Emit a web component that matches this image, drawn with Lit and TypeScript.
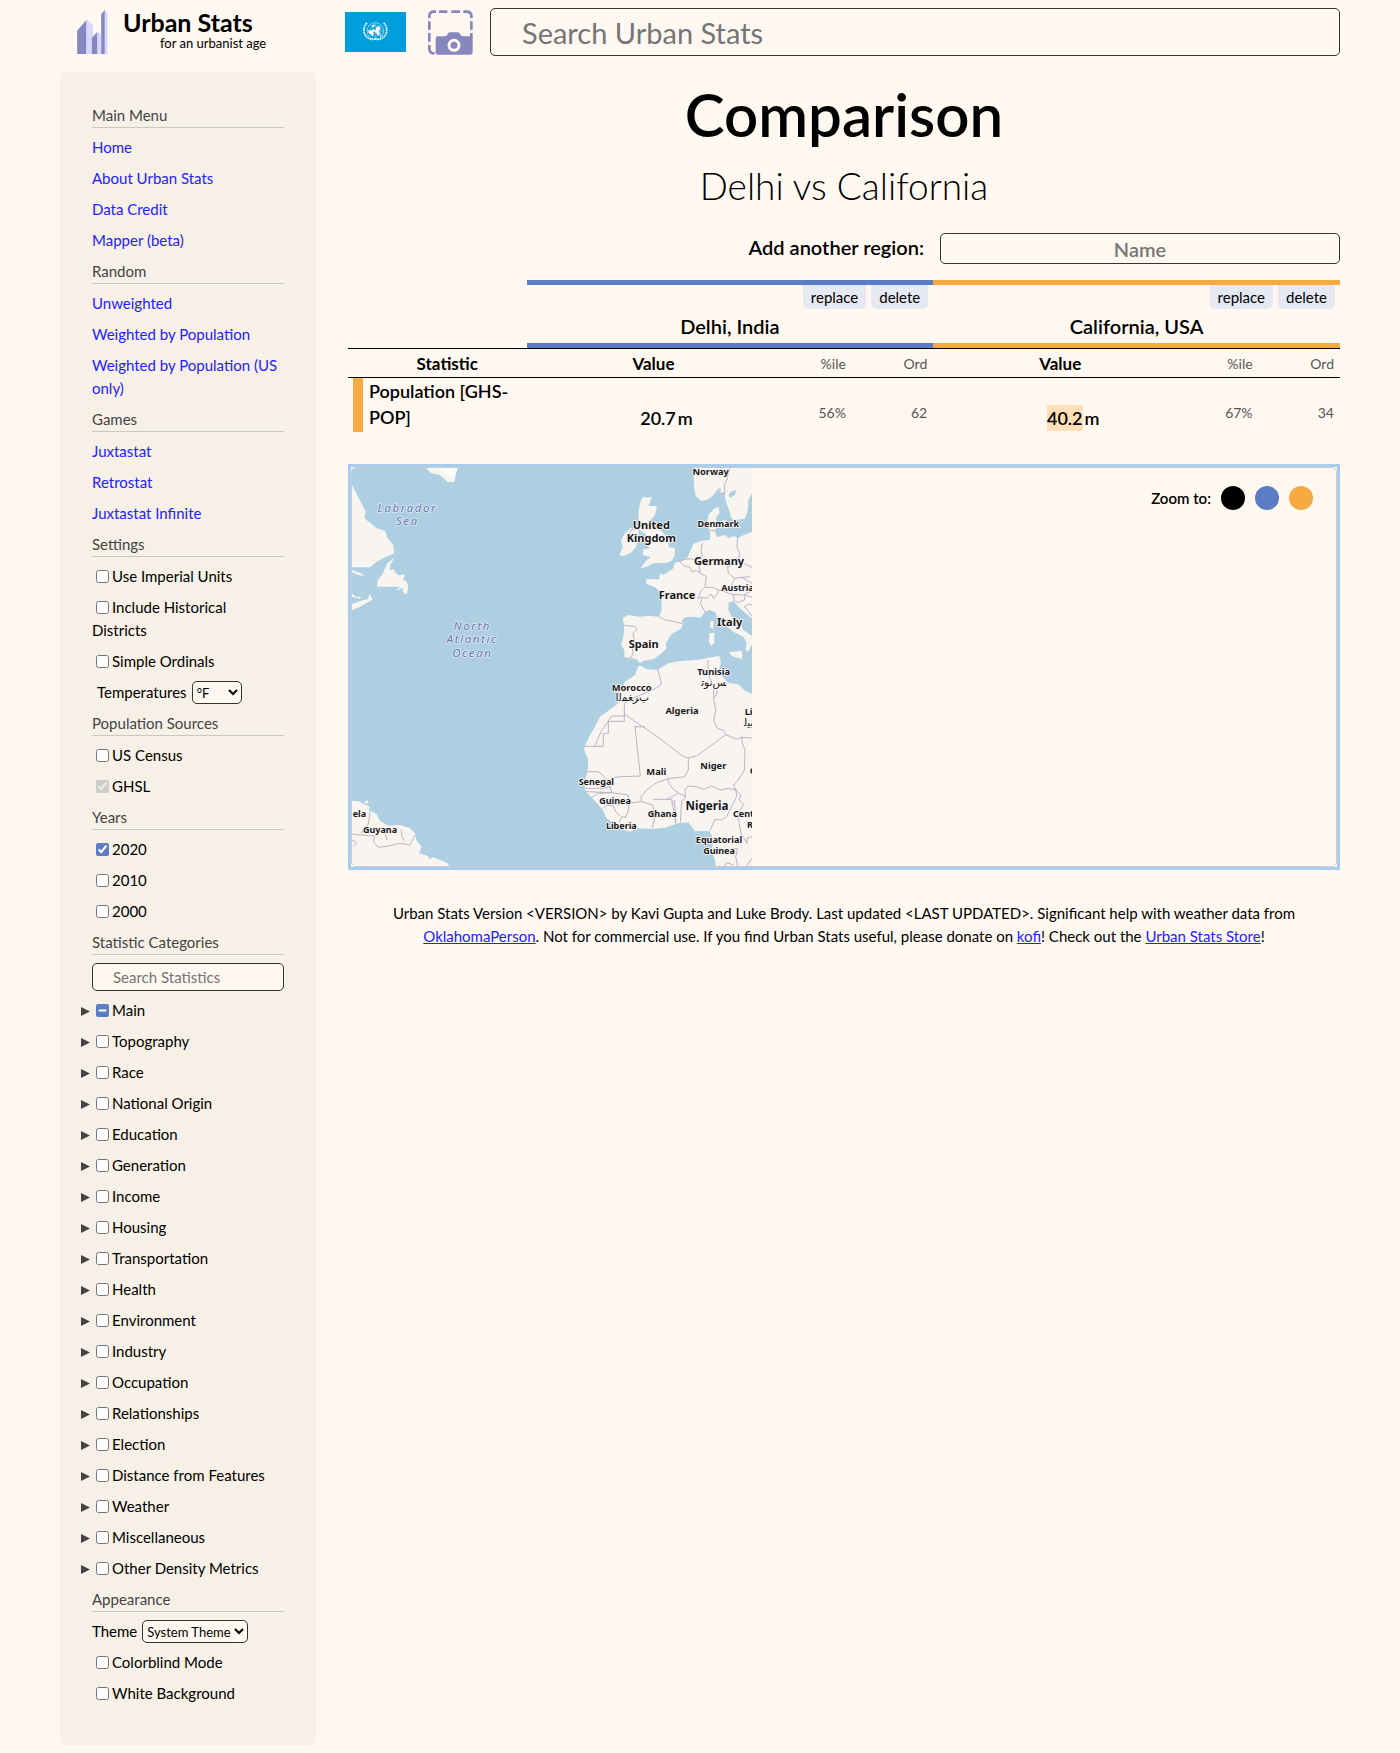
import { LitElement, html, svg, css, nothing } from "lit";
import { customElement } from "lit/decorators.js";

interface CheckItem {
  id: string;
  label: string;
  checked?: boolean;
  disabled?: boolean;
}

interface Region {
  name: string;
  tone: "first" | "second";
  value: string;
  best: boolean;
  percentile: string;
  ordinal: string;
}

const REGIONS: Region[] = [
  { name: "Delhi, India", tone: "first", value: "20.7", best: false, percentile: "56%", ordinal: "62" },
  { name: "California, USA", tone: "second", value: "40.2", best: true, percentile: "67%", ordinal: "34" },
];

const LINK_GROUPS: { title: string; links: string[] }[] = [
  { title: "Main Menu", links: ["Home", "About Urban Stats", "Data Credit", "Mapper (beta)"] },
  { title: "Random", links: ["Unweighted", "Weighted by Population", "Weighted by Population (US only)"] },
  { title: "Games", links: ["Juxtastat", "Retrostat", "Juxtastat Infinite"] },
];

const CATEGORIES = [
  "Main", "Topography", "Race", "National Origin", "Education", "Generation", "Income",
  "Housing", "Transportation", "Health", "Environment", "Industry", "Occupation",
  "Relationships", "Election", "Distance from Features", "Weather", "Miscellaneous",
  "Other Density Metrics",
];

const base = css`
  * {
    box-sizing: border-box;
  }
  :host {
    display: block;
    font-family: Lato, "Open Sans", sans-serif;
    font-size: 15px;
    line-height: 23px;
    color: #000;
  }
  h1, h2, h3, p, ul {
    margin: 0;
    padding: 0;
  }
  input, select, button {
    font-family: inherit;
  }
  .field {
    background: #fff8f0;
    border: 1px solid #333;
    border-radius: 5px;
    min-width: 0;
  }
  .field::placeholder {
    color: #757575;
  }
`;

@customElement("stats-header")
class StatsHeader extends LitElement {
  static styles = [
    base,
    css`
      .bar {
        display: flex;
        align-items: center;
        gap: 29px;
        height: 48px;
      }
      .brand {
        width: 256px;
        display: flex;
        align-items: center;
        gap: 15px;
        padding-left: 17px;
        color: inherit;
        text-decoration: none;
      }
      .words {
        display: flex;
        flex-direction: column;
        padding-bottom: 4px;
      }
      .name {
        font-size: 25px;
        font-weight: 700;
        line-height: 26px;
      }
      .motto {
        font-size: 13px;
        line-height: 16px;
        padding-left: 37px;
      }
      .tools {
        flex: 1;
        display: flex;
        align-items: center;
        align-self: stretch;
      }
      svg {
        display: block;
        flex: none;
      }
      .shot {
        border: 0;
        background: none;
        padding: 0;
        margin: 0 17px 0 22px;
      }
      .search {
        flex: 1;
        align-self: stretch;
        font-size: 29px;
        padding: 0 31px;
      }
    `,
  ];

  render() {
    return html`
      <header class="bar">
        <a class="brand" href="#home">
          <svg width="31" height="44" viewBox="80 28 92 132" aria-hidden="true">
            <path fill="#8787bf" d="M80 90L108 57V160H80ZM123 112L141 93V160H123ZM152 40L163 28V160H152Z" />
            <path fill="#d7d7ff" d="M108 57L127 72V108L123 112V160H108ZM141 93L152 99V160H141ZM163 28L171 36V160H163Z" />
          </svg>
          <span class="words">
            <span class="name">Urban Stats</span>
            <span class="motto">for an urbanist age</span>
          </span>
        </a>
        <div class="tools">
          <svg width="61" height="40" viewBox="0 0 183 120" role="img" aria-label="United Nations">
            <path fill="#009edb" d="M0 0H183V120H0Z" />
            <g fill="none" stroke="#fff">
              <circle cx="91" cy="57" r="25" stroke-width="1.5" />
              <circle cx="91" cy="57" r="17" stroke-width="1" opacity="0.8" />
              <path stroke-width="1" opacity="0.8" d="M91 32V82M66 57H116M74 40L108 74M108 40L74 74" />
              <path stroke-width="5" stroke-dasharray="5 2" d="M66 33C53 44 54 68 68 77C76 83 84 84 91 80" />
              <path stroke-width="5" stroke-dasharray="5 2" d="M116 33C129 44 128 68 114 77C106 83 98 84 91 80" />
            </g>
            <path fill="#fff" d="M71 53L78 56L86 50L90 55L84 62L88 67L82 73L76 66L70 62ZM94 44L104 43L107 51L102 55L105 66L98 72L93 62L88 60L93 52ZM80 40L88 37L88 45L82 46ZM104 70L110 66L107 74Z" />
          </svg>
          <button class="shot" aria-label="Take a screenshot">
            <svg width="45" height="45" viewBox="0 0 135 135" aria-hidden="true">
              <path
                fill="none"
                stroke="#8787bf"
                stroke-width="8"
                d="M4 24V18Q4 5 18 5H24M33 5H58M70 5H96M106 5H115Q130 5 130 18V24M130 34V59M130 69V84M4 34V59M4 69V95M4 105V116Q4 130 20 130"
              />
              <path fill="#8787bf" d="M23 86Q23 79 30 79H50Q56 79 59 72Q61 67 66 67H89Q94 67 96 72Q99 79 106 79H134V127Q134 134 127 134H30Q23 134 23 127Z" />
              <circle cx="78" cy="106" r="15" fill="none" stroke="#fff8f0" stroke-width="9" />
            </svg>
          </button>
          <input class="search field" type="text" placeholder="Search Urban Stats" aria-label="Search Urban Stats" />
        </div>
      </header>
    `;
  }
}

@customElement("stats-sidebar")
class StatsSidebar extends LitElement {
  static styles = [
    base,
    css`
      .panel {
        display: flex;
        flex-direction: column;
        gap: 8px;
        padding: 32px 32px 40px;
        background: #f7f0e6;
        border-radius: 5px;
      }
      .group {
        display: flex;
        flex-direction: column;
        gap: 8px;
      }
      .title {
        font-size: 15px;
        font-weight: 400;
        line-height: 23px;
        color: #444;
        border-bottom: 1px solid #c8c8c8;
      }
      .list {
        list-style: none;
        display: flex;
        flex-direction: column;
        gap: 8px;
      }
      a {
        color: #2222ff;
        text-decoration: none;
      }
      input[type="checkbox"] {
        width: 13px;
        height: 13px;
        margin: 0 3px 0 4px;
        vertical-align: -1px;
        accent-color: #5a7dc3;
      }
      .choice {
        display: flex;
        align-items: center;
        gap: 5px;
        height: 23px;
      }
      .inset {
        padding-left: 5px;
      }
      .choice select {
        font-size: 13px;
        height: 23px;
        padding: 0;
      }
      .degrees {
        width: 50px;
      }
      .filter {
        height: 28px;
        font-size: 15px;
        padding: 0 20px;
        width: 100%;
      }
      .category {
        display: flex;
        margin-left: -11px;
      }
      .expand {
        width: 11px;
        flex: none;
        border: 0;
        padding: 2px 0 0;
        background: none;
        display: flex;
        align-items: center;
      }
    `,
  ];

  private check(item: CheckItem) {
    return html`<input
        type="checkbox"
        id=${item.id}
        ?checked=${item.checked ?? false}
        ?disabled=${item.disabled ?? false}
      /><label for=${item.id}>${item.label}</label>`;
  }

  private checkList(items: CheckItem[]) {
    return items.map((item) => html`<li>${this.check(item)}</li>`);
  }

  render() {
    return html`
      <nav class="panel">
        ${LINK_GROUPS.map(
          (group) => html`
            <section class="group">
              <h3 class="title">${group.title}</h3>
              <ul class="list">
                ${group.links.map((text) => html`<li><a href="#">${text}</a></li>`)}
              </ul>
            </section>
          `
        )}
        <section class="group">
          <h3 class="title">Settings</h3>
          <ul class="list">
            ${this.checkList([
              { id: "imperial", label: "Use Imperial Units" },
              { id: "historical", label: "Include Historical Districts" },
              { id: "ordinals", label: "Simple Ordinals" },
            ])}
            <li class="choice inset">
              <label for="degrees">Temperatures</label>
              <select id="degrees" class="degrees field"><option>°F</option><option>°C</option></select>
            </li>
          </ul>
        </section>
        <section class="group">
          <h3 class="title">Population Sources</h3>
          <ul class="list">
            ${this.checkList([
              { id: "census", label: "US Census" },
              { id: "ghsl", label: "GHSL", checked: true, disabled: true },
            ])}
          </ul>
        </section>
        <section class="group">
          <h3 class="title">Years</h3>
          <ul class="list">
            ${this.checkList([
              { id: "y2020", label: "2020", checked: true },
              { id: "y2010", label: "2010" },
              { id: "y2000", label: "2000" },
            ])}
          </ul>
        </section>
        <section class="group">
          <h3 class="title">Statistic Categories</h3>
          <input class="filter field" type="text" placeholder="Search Statistics" aria-label="Search Statistics" />
          <ul class="list">
            ${CATEGORIES.map(
              (name, i) => html`
                <li class="category">
                  <button class="expand" aria-label="Expand ${name}">
                    <svg width="9" height="9" viewBox="0 0 9 9"><path fill="#444" d="M0 0L9 4.5L0 9Z" /></svg>
                  </button>
                  <span
                    ><input type="checkbox" id="category-${i}" .indeterminate=${i === 0} /><label for="category-${i}"
                      >${name}</label
                    ></span
                  >
                </li>
              `
            )}
          </ul>
        </section>
        <section class="group">
          <h3 class="title">Appearance</h3>
          <ul class="list">
            <li class="choice">
              <label for="theme">Theme</label>
              <select id="theme" class="field"><option>System Theme</option></select>
            </li>
            ${this.checkList([
              { id: "colorblind", label: "Colorblind Mode" },
              { id: "white", label: "White Background" },
            ])}
          </ul>
        </section>
      </nav>
    `;
  }
}

const LAND = [
  // Labrador and Quebec
  "M21 75L62 155L58 175L95 205L120 212L128 235L145 255L147 280L120 292L95 305L75 322L21 322Z",
  // Newfoundland
  "M149 292L127 310L112 343L98 360L96 380L165 380L149 394L172 384L175 400L186 402L190 378L182 360L174 364L180 342L163 346L150 338L148 328L134 331L136 314Z",
  // Nova Scotia, Anticosti
  "M21 400L32 410H50L44 416L26 412L21 410ZM21 432L55 420L68 418L74 402L83 419L45 440L21 450Z",
  "M21 330L48 340L57 348L40 345L21 337Z",
  // Greenland
  "M243 24L258 40L283 44L308 66H327L338 24Z",
  // Scandinavia
  "M1045 24L1048 85L1052 108L1070 123L1090 118L1108 102L1120 85L1126 98L1138 98L1143 125L1152 150L1158 172L1165 180L1200 176L1208 150L1210 120L1221 100V24Z",
  // Great Britain, Ireland
  "M893 112H921L910 138H936L930 165L912 185L935 192L945 210L958 222L970 245L972 262L990 264L988 290L978 304L965 308L925 310L910 318L885 326L905 300L918 292L893 285L895 268L915 265L905 255L905 235L902 222L885 212L882 190L880 155L885 130Z",
  "M858 203L880 208L882 240L872 262L858 278L835 288L823 285L833 262L828 240L840 220Z",
  // Continental Europe
  "M1221 215L1190 228L1178 236L1168 228L1150 234L1140 224L1116 232L1110 215L1118 190L1112 175L1124 158L1120 140L1105 148L1090 165L1087 195L1095 215V240L1070 242L1045 252L1035 275L1028 292L1005 305L990 308L985 325L955 345L945 340L942 358L925 358L903 358L905 372L930 382L945 395L950 415V450L942 470L915 468L880 470L850 465L833 475L838 500L835 530L828 555L838 570V592L857 594L875 598L885 610L895 602L925 598L950 580L965 565L962 550L980 522L1010 505L1013 490L1010 482L1020 472L1050 470L1065 474L1080 455L1095 450L1110 457L1118 472L1135 490L1165 515L1195 530L1205 548L1202 570L1210 576L1221 553V528L1195 510L1180 480L1160 470L1150 450V428L1165 422L1180 440L1200 458L1221 475Z",
  // Danish isles
  "M1128 184L1140 180L1150 190L1144 206L1130 200Z",
  // Mediterranean islands
  "M1097 483L1106 483L1104 508L1095 500ZM1093 520L1108 518V550L1098 557L1092 545ZM1152 577L1190 572L1192 598L1160 588Z",
  // Africa
  "M880 618H890L905 628L937 630L970 610L1000 604L1055 600L1100 592L1122 588L1128 605L1122 630L1132 650L1150 668L1180 673L1200 692L1221 702V1218H1112L1110 1200L1098 1170L1105 1150L1100 1125L1092 1113L1050 1114L1030 1087L1000 1090L960 1103L925 1107L880 1105L855 1115L830 1108L810 1095L785 1075L772 1048L755 1028L740 1012L722 995L718 975L725 945L730 920L728 895L717 868L722 852L735 825L750 800L765 770L790 752L820 730L822 700L840 665L870 645Z",
  // South America, Trinidad
  "M21 1023H40L55 1032L75 1040L70 1050L95 1062L105 1082L130 1097L165 1095L195 1105L210 1120L215 1142L230 1160L222 1180L250 1188L252 1198L265 1192L285 1200L308 1210L312 1218H21ZM56 1027L68 1020V1031Z",
];

const BORDERS = [
  "M1155 24L1148 45L1146 60L1138 75L1140 100L1128 100",
  "M1095 211H1113M853 222L862 206L870 212",
  "M1072 250L1068 272L1072 288L1060 300L1062 318L1066 340L1084 350L1080 380L1070 390L1058 415M1003 304L1020 298L1038 296L1052 302M1003 304L1018 318L1035 322L1040 335L1055 332L1066 340",
  "M1178 236L1176 262L1184 280L1180 310L1165 314L1148 320L1150 340L1170 355L1190 352L1221 370M1184 300L1200 312L1221 322M1170 356L1160 372L1162 380L1140 395L1120 390L1105 382L1080 382M1058 415L1072 412L1085 415L1098 402L1106 415L1118 400L1120 390M1072 415L1066 430L1080 456M1140 395L1160 403L1195 405L1221 392M1165 405L1168 422L1180 428L1198 420L1200 405L1221 412M1198 440L1210 432L1221 435M1198 440L1221 468M1190 352L1215 350",
  "M942 470L960 480L985 484L1012 491M838 496L870 500L876 508L864 520L868 540L862 560L864 580L857 594",
  "M938 628L944 650L950 672L938 682L910 695L870 712L838 730V762L878 790L940 832L1015 890L1030 893L1055 888L1090 862L1143 824L1135 810L1118 806L1106 782L1112 750L1106 715V680L1094 655L1090 630L1088 600M1106 715L1116 700V688M838 784H790V820H775V859H718M838 784V762M838 768H800L785 790L768 815L750 857",
  "M878 800H870L886 948L830 950L808 952L795 965M870 800L900 800M1030 893V930L1018 950L970 956L935 968L905 990L888 1010L890 1025L862 1028L850 1020M1143 824L1175 838L1190 832L1221 834M1190 832L1192 850L1200 870L1198 930L1180 960L1166 975L1172 990L1150 985L1125 990L1100 978L1075 988L1052 980L1030 978L1020 990L1022 1010L1010 1025L1006 1088",
  "M725 935H760L775 948L792 965L800 998L722 995M722 985H775L795 980M740 1012L760 1000L800 998L850 1005L852 1030L850 1050L842 1072L830 1070L822 1090M775 1045L785 1035L805 1038L812 1055L825 1068M890 1025L924 1036L930 1070L922 1104M924 1018H980L986 1050L992 1090M968 956L972 970L985 988L1005 1002L1022 1010M965 1018L980 1010L1000 1000M978 1030L988 1022L992 1060V1090",
  "M1172 990L1188 1005L1182 1020L1196 1032L1180 1060L1182 1090L1188 1120L1206 1150M1172 985L1175 1010L1160 1040L1145 1070L1130 1080L1110 1078L1095 1112M1115 1170H1140M1145 1170L1178 1165L1172 1190L1178 1218M1140 1218L1145 1208L1165 1215M1206 1150V1135L1221 1130M1205 1218L1221 1195",
  "M75 1055L70 1092L55 1110L48 1120M21 1122L45 1125L90 1128L85 1145L100 1162L130 1158L165 1150L195 1155L210 1125M120 1120L125 1140M168 1108L172 1135L180 1142M21 1140L35 1148L25 1160",
];

interface MapLabel {
  x: number;
  y: number;
  size: number;
  lines: string[];
  kind?: "sea" | "arabic";
  anchor?: "start";
}

const LABELS: MapLabel[] = [
  { x: 187, y: 156, size: 34, lines: ["Labrador", "Sea"], kind: "sea" },
  { x: 382, y: 510, size: 34, lines: ["North", "Atlantic", "Ocean"], kind: "sea" },
  { x: 1097, y: 46, size: 28, lines: ["Norway"] },
  { x: 919, y: 207, size: 33, lines: ["United", "Kingdom"] },
  { x: 1120, y: 200, size: 27, lines: ["Denmark"] },
  { x: 1122, y: 314, size: 33, lines: ["Germany"] },
  { x: 1129, y: 392, size: 27, lines: ["Austria"], anchor: "start" },
  { x: 996, y: 416, size: 33, lines: ["France"] },
  { x: 1154, y: 498, size: 33, lines: ["Italy"] },
  { x: 896, y: 563, size: 33, lines: ["Spain"] },
  { x: 1106, y: 645, size: 28, lines: ["Tunisia"] },
  // Arabic names use presentation forms so that each letter keeps its shape when laid left to right.
  { x: 1106, y: 677, size: 32, lines: ["\uFE97\uFEEE\uFEE7\uFEB2"], kind: "arabic" },
  { x: 860, y: 692, size: 28, lines: ["Morocco"] },
  { x: 862, y: 724, size: 32, lines: ["\uFE8D\uFEDF\uFEE4\uFED0\uFEAE\uFE8F"], kind: "arabic" },
  { x: 1011, y: 762, size: 28, lines: ["Algeria"] },
  { x: 1199, y: 764, size: 28, lines: ["Libya"], anchor: "start" },
  { x: 1197, y: 797, size: 32, lines: ["\uFEDF\uFEF4\uFE92\uFEF4\uFE8E"], kind: "arabic", anchor: "start" },
  { x: 1105, y: 926, size: 28, lines: ["Niger"] },
  { x: 934, y: 946, size: 28, lines: ["Mali"] },
  { x: 1214, y: 942, size: 28, lines: ["Chad"], anchor: "start" },
  { x: 754, y: 975, size: 27, lines: ["Senegal"] },
  { x: 810, y: 1032, size: 27, lines: ["Guinea"] },
  { x: 1086, y: 1051, size: 35, lines: ["Nigeria"] },
  { x: 952, y: 1072, size: 27, lines: ["Ghana"] },
  { x: 829, y: 1106, size: 27, lines: ["Liberia"] },
  { x: 1164, y: 1071, size: 27, lines: ["Central"], anchor: "start" },
  { x: 1206, y: 1103, size: 27, lines: ["Rep."], anchor: "start" },
  { x: 1122, y: 1150, size: 27, lines: ["Equatorial", "Guinea"] },
  { x: 23, y: 1072, size: 27, lines: ["ela"], anchor: "start" },
  { x: 105, y: 1119, size: 27, lines: ["Guyana"] },
];

@customElement("region-map")
class RegionMap extends LitElement {
  static styles = [
    base,
    css`
      .frame {
        border: 3px solid #a9cdef;
      }
      .canvas {
        display: flex;
        justify-content: space-between;
        align-items: flex-start;
        border: 1px solid #ccc;
        border-radius: 5px;
        overflow: hidden;
      }
      .tile {
        display: block;
        flex: none;
        background: #aecfe2;
      }
      .label {
        font-family: "Noto Sans", sans-serif;
        font-weight: 700;
        fill: #17181c;
        stroke: #f8f5f1;
        stroke-width: 5px;
        stroke-linejoin: round;
        paint-order: stroke;
      }
      .sea {
        font-weight: 400;
        font-style: italic;
        letter-spacing: 5px;
        fill: #6878b0;
        stroke: #dfe9f2;
      }
      .arabic {
        font-family: "DejaVu Sans", sans-serif;
        font-weight: 400;
        direction: ltr;
        unicode-bidi: bidi-override;
      }
      .zoom {
        display: flex;
        align-items: center;
        gap: 10px;
        padding: 18px 23px 0 0;
        font-size: 15px;
        font-weight: 600;
      }
      .dot {
        width: 24px;
        height: 24px;
        border: 0;
        padding: 0;
        border-radius: 50%;
        background: #000;
      }
      .first {
        background: #5a7dc3;
      }
      .second {
        background: #f7aa41;
      }
    `,
  ];

  private label(item: MapLabel) {
    const step = item.size === 27 ? 32 : 40;
    return svg`<text class="label ${item.kind ?? ""}" font-size=${item.size} text-anchor=${item.anchor ?? "middle"}>
      ${item.lines.map((line, i) => svg`<tspan x=${item.x} y=${item.y + i * step}>${line}</tspan>`)}
    </text>`;
  }

  render() {
    return html`
      <div class="frame">
        <div class="canvas">
          <svg class="tile" width="400" height="398" viewBox="21 24 1200 1194" role="img" aria-label="Map">
            <g fill="#f8f5f1">${LAND.map((d) => svg`<path d=${d} />`)}</g>
            <path fill="#fff" d="M280 24L300 40L322 52L332 24Z" />
            <path fill="#aecfe2" d="M1150 105L1160 93L1173 91L1170 104L1155 113ZM1120 85L1128 86L1126 96Z" />
            <g fill="none" stroke="#b9b4c3" stroke-width="3" stroke-linejoin="round">
              ${BORDERS.map((d) => svg`<path d=${d} />`)}
            </g>
            ${LABELS.map((item) => this.label(item))}
          </svg>
          <div class="zoom">
            <span>Zoom to:</span>
            <button class="dot" aria-label="All regions"></button>
            <button class="dot first" aria-label="Delhi, India"></button>
            <button class="dot second" aria-label="California, USA"></button>
          </div>
        </div>
      </div>
    `;
  }
}

@customElement("comparison-table")
class ComparisonTable extends LitElement {
  static styles = [
    base,
    css`
      table {
        width: 100%;
        table-layout: fixed;
        border-collapse: separate;
        border-spacing: 0;
      }
      th, td {
        padding: 0;
        font-weight: 400;
      }
      .c-name {
        width: 18%;
      }
      .c-value {
        width: 26%;
      }
      .c-small {
        width: 7%;
      }
      .c-ord {
        width: 8%;
      }
      .region {
        border-top: 5px solid;
        border-bottom: 5px solid;
        vertical-align: top;
      }
      .first {
        border-color: #5a7dc3;
      }
      .second {
        border-color: #f7aa41;
      }
      .actions {
        display: flex;
        justify-content: flex-end;
        gap: 5px;
        padding-right: 5px;
      }
      .actions button {
        height: 24px;
        border: 0;
        border-radius: 0 0 5px 5px;
        background: #e6e9f2;
        padding: 0 8px;
        font-size: 15px;
        line-height: 22px;
      }
      .place {
        font-size: 20px;
        font-weight: 600;
        line-height: 34px;
      }
      .heads th {
        border-top: 1px solid #000;
        border-bottom: 1px solid #000;
        height: 30px;
        font-size: 17px;
        font-weight: 700;
        padding-right: 4px;
      }
      .heads .statistic-head {
        padding: 0 0 0 20px;
      }
      .heads .small,
      .data .small {
        font-size: 14px;
        font-weight: 400;
        color: #555;
        text-align: right;
        padding-right: 6px;
      }
      .heads .percentile,
      .data .percentile {
        padding-right: 8px;
      }
      .statistic {
        display: flex;
        gap: 6px;
        padding-left: 5px;
        text-align: left;
        font-size: 18px;
        font-weight: 600;
        line-height: 26px;
      }
      .marker {
        flex: none;
        width: 10px;
        background: #f7aa41;
      }
      .statistic-name {
        padding-bottom: 2px;
      }
      .data td {
        vertical-align: bottom;
        text-align: center;
      }
      .value {
        display: inline-flex;
        gap: 2px;
        font-size: 18px;
        font-weight: 600;
        line-height: 26px;
        padding: 0 0 1px 22px;
      }
      .best {
        background: #ffe0ba;
      }
      .data .small {
        padding-bottom: 8px;
      }
    `,
  ];

  render() {
    return html`
      <table>
        <colgroup>
          <col class="c-name" />
          ${REGIONS.map(() => html`<col class="c-value" /><col class="c-small" /><col class="c-ord" />`)}
        </colgroup>
        <thead>
          <tr>
            <td></td>
            ${REGIONS.map(
              (r) => html`
                <th class="region ${r.tone}" colspan="3" scope="colgroup">
                  <div class="actions"><button>replace</button><button>delete</button></div>
                  <div class="place">${r.name}</div>
                </th>
              `
            )}
          </tr>
          <tr class="heads">
            <th class="statistic-head" scope="col">Statistic</th>
            ${REGIONS.map(
              () => html`
                <th scope="col">Value</th>
                <th class="small percentile" scope="col">%ile</th>
                <th class="small" scope="col">Ord</th>
              `
            )}
          </tr>
        </thead>
        <tbody>
          <tr class="data">
            <th scope="row">
              <div class="statistic">
                <span class="marker"></span>
                <span class="statistic-name">Population [GHS-<br />POP]</span>
              </div>
            </th>
            ${REGIONS.map(
              (r) => html`
                <td>
                  <span class="value"><span class=${r.best ? "best" : nothing}>${r.value}</span><span>m</span></span>
                </td>
                <td class="small percentile">${r.percentile}</td>
                <td class="small">${r.ordinal}</td>
              `
            )}
          </tr>
        </tbody>
      </table>
    `;
  }
}

@customElement("app-root")
class AppRoot extends LitElement {
  static styles = [
    base,
    css`
      :host {
        background: #fff8f0;
        padding: 8px 60px;
        min-height: 100vh;
      }
      .page {
        display: grid;
        grid-template-columns: 256px minmax(0, 1fr);
        column-gap: 32px;
        align-items: start;
        padding-top: 16px;
      }
      main {
        text-align: center;
      }
      h1 {
        font-size: 60px;
        font-weight: 600;
        line-height: 84px;
      }
      h2 {
        font-size: 37px;
        font-weight: 300;
        line-height: 60px;
      }
      .add {
        display: flex;
        justify-content: flex-end;
        align-items: center;
        gap: 16px;
        margin: 17px 0 16px;
        font-size: 20px;
        font-weight: 600;
      }
      .add label {
        padding-bottom: 2px;
      }
      .add input {
        width: 400px;
        height: 31px;
        font-size: 20px;
        font-weight: 600;
        text-align: center;
      }
      region-map {
        margin-top: 32px;
      }
      footer {
        padding: 32px 28px 0;
      }
      footer a {
        color: #2222ff;
      }
    `,
  ];

  render() {
    return html`
      <stats-header></stats-header>
      <div class="page">
        <stats-sidebar></stats-sidebar>
        <main>
          <h1>Comparison</h1>
          <h2>Delhi vs California</h2>
          <div class="add">
            <label for="add-region">Add another region:</label>
            <input id="add-region" class="field" type="text" placeholder="Name" />
          </div>
          <comparison-table></comparison-table>
          <region-map></region-map>
          <footer>
            Urban Stats Version &lt;VERSION&gt; by Kavi Gupta and Luke Brody. Last updated &lt;LAST UPDATED&gt;.
            Significant help with weather data from <a href="#">OklahomaPerson</a>. Not for commercial use. If you find
            Urban Stats useful, please donate on <a href="#">kofi</a>! Check out the <a href="#">Urban Stats Store</a>!
          </footer>
        </main>
      </div>
    `;
  }
}
